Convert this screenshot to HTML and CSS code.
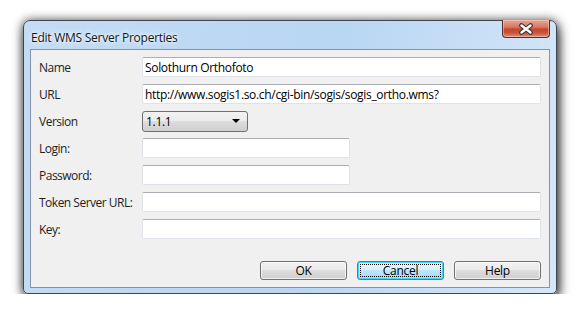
FILE: index.html
```html
<!DOCTYPE html>
<html lang="en">
<head>
    <meta charset="UTF-8">
    <title>Edit WMS Server Properties</title>
    <link rel="stylesheet" href="styles.css">
</head>
<body>
    <div class="window">
        <div class="titlebar">
            <span class="title">Edit WMS Server Properties</span>
            <button class="close" title="Close">
                <svg width="16" height="12" viewBox="0 0 16 12">
                    <path d="M3.5 2.5 L12.5 9.5 M12.5 2.5 L3.5 9.5" stroke="#3a3030" stroke-width="4.6" stroke-linecap="round"/>
                    <path d="M3.5 2.5 L12.5 9.5 M12.5 2.5 L3.5 9.5" stroke="#ffffff" stroke-width="2.4" stroke-linecap="round"/>
                </svg>
            </button>
        </div>

        <div class="client">
            <div class="form">
                <label>Name</label>
                <input type="text" class="wide" value="Solothurn Orthofoto">

                <label>URL</label>
                <input type="text" class="wide" value="http://www.sogis1.so.ch/cgi-bin/sogis/sogis_ortho.wms?">

                <label>Version</label>
                <div class="combo">
                    <span>1.1.1</span>
                    <span class="arrow"></span>
                </div>

                <label>Login:</label>
                <input type="text" class="short">

                <label>Password:</label>
                <input type="password" class="short">

                <label>Token Server URL:</label>
                <input type="text" class="wide">

                <label>Key:</label>
                <input type="text" class="wide">
            </div>

            <div class="buttons">
                <button class="btn">OK</button>
                <button class="btn focused"><span>Cancel</span></button>
                <button class="btn">Help</button>
            </div>
        </div>
    </div>
</body>
</html>
```

FILE: styles.css
```css
* {
    box-sizing: border-box;
    margin: 0;
    padding: 0;
}

body {
    background: #ffffff;
    font-family: 'Open Sans', 'Noto Sans', sans-serif;
    font-size: 12px;
    color: #1e1e1e;
}

.window {
    margin: 20px 0 0 23px;
    width: 534px;
    height: 274px;
    border: 1px solid #3e4650;
    border-radius: 7px 7px 5px 5px;
    background: linear-gradient(100deg, #c4dcf4 0%, #b9d6f3 55%, #d6e7f9 100%);
    box-shadow: 0 0 10px 1px rgba(0, 0, 0, 0.5), 2px 6px 12px rgba(0, 0, 0, 0.7);
    padding: 0 6px 5px 6px;
    display: flex;
    flex-direction: column;
}

.titlebar {
    height: 28px;
    display: flex;
    align-items: flex-start;
    justify-content: space-between;
}

.title {
    margin: 8px 0 0 1px;
    font-size: 12px;
    letter-spacing: -0.25px;
    color: #141414;
    text-shadow: 0 0 6px #ffffff, 0 0 3px #ffffff;
}

.close {
    width: 48px;
    height: 18px;
    margin: -1px 0 0 0;
    border: 1px solid #5a2a24;
    border-top: none;
    border-radius: 0 0 4px 4px;
    background: linear-gradient(#e7a796 0%, #d67a64 40%, #c5462e 55%, #c9533a 75%, #dc8e78 100%);
    box-shadow: inset 0 0 0 1px rgba(255, 220, 210, 0.45);
    display: flex;
    align-items: center;
    justify-content: center;
}

.client {
    flex: 1;
    background: #f0f0f0;
    border: 1px solid #8293aa;
    padding: 7px 8px 7px 8px;
    display: flex;
    flex-direction: column;
}

.form {
    display: grid;
    grid-template-columns: 103px 1fr;
    grid-auto-rows: 20px;
    row-gap: 7px;
    align-items: center;
}

.form label {
    font-size: 12px;
    letter-spacing: -0.5px;
}

.form input {
    height: 20px;
    border: 1px solid #dfe3e9;
    border-top-color: #abadb3;
    border-radius: 2px;
    background: #ffffff;
    font-family: inherit;
    font-size: 12px;
    letter-spacing: -0.32px;
    color: #000000;
    padding: 0 2px;
}

.form input.short {
    width: 208px;
}

.form input.wide {
    width: 100%;
}

.combo {
    width: 106px;
    height: 21px;
    border: 1px solid #707070;
    border-radius: 3px;
    background: linear-gradient(#f2f2f2 0%, #ebebeb 45%, #dddddd 50%, #cfcfcf 100%);
    display: flex;
    align-items: center;
    justify-content: space-between;
    padding: 0 7px 0 3px;
    color: #000000;
    letter-spacing: -0.3px;
}

.combo .arrow {
    width: 0;
    height: 0;
    border-left: 4px solid transparent;
    border-right: 4px solid transparent;
    border-top: 4px solid #000000;
}

.buttons {
    margin-top: 22px;
    display: flex;
    justify-content: flex-end;
    gap: 10px;
}

.btn {
    width: 87px;
    height: 19px;
    border: 1px solid #707070;
    border-radius: 3px;
    background: linear-gradient(#f2f2f2 0%, #ebebeb 45%, #dddddd 50%, #cfcfcf 100%);
    box-shadow: inset 0 0 0 1px rgba(255, 255, 255, 0.7);
    font-family: inherit;
    font-size: 12px;
    letter-spacing: -0.3px;
    color: #000000;
    display: flex;
    align-items: center;
    justify-content: center;
}

.btn.focused {
    border-color: #3c7fb1;
    background: linear-gradient(#eaf6fd 0%, #d9f0fc 45%, #bee6fd 50%, #a7d9f5 100%);
    box-shadow: inset 0 0 0 1px #48d4fb;
    padding: 2px;
}

.btn.focused span {
    flex: 1;
    align-self: stretch;
    border: 1px dotted #000000;
    display: flex;
    align-items: center;
    justify-content: center;
}
```
